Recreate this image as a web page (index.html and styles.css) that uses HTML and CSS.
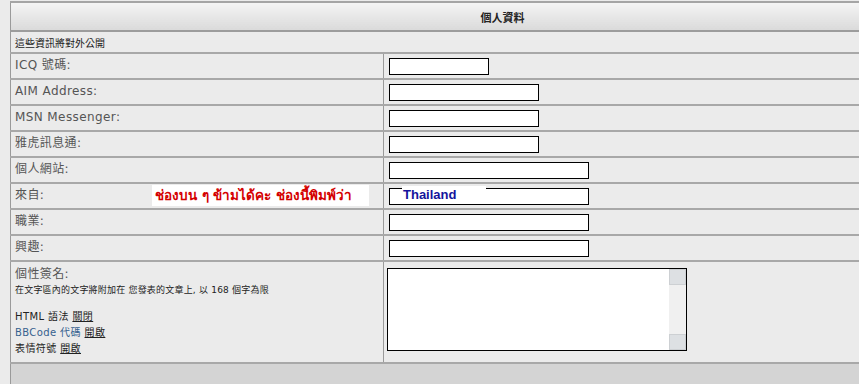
FILE: index.html
```html
<!DOCTYPE html>
<html lang="zh-Hant">
<head>
    <meta charset="UTF-8">
    <title>個人資料</title>
    <link rel="stylesheet" href="styles.css">
</head>
<body>

<div class="page">
    <table class="profile">
        <tr>
            <th colspan="2" class="head">個人資料</th>
        </tr>
        <tr>
            <td colspan="2" class="note">這些資訊將對外公開</td>
        </tr>
        <tr>
            <td class="label">ICQ 號碼:</td>
            <td class="field"><input type="text" class="box short"></td>
        </tr>
        <tr>
            <td class="label">AIM Address:</td>
            <td class="field"><input type="text" class="box mid"></td>
        </tr>
        <tr>
            <td class="label">MSN Messenger:</td>
            <td class="field"><input type="text" class="box mid"></td>
        </tr>
        <tr>
            <td class="label">雅虎訊息通:</td>
            <td class="field"><input type="text" class="box mid"></td>
        </tr>
        <tr>
            <td class="label">個人網站:</td>
            <td class="field"><input type="text" class="box long"></td>
        </tr>
        <tr>
            <td class="label from">來自:
                <span class="hint">ช่องบน ๆ ข้ามได้คะ ช่องนี้พิมพ์ว่า</span>
            </td>
            <td class="field from">
                <input type="text" class="box long">
                <span class="answer">Thailand</span>
            </td>
        </tr>
        <tr>
            <td class="label">職業:</td>
            <td class="field"><input type="text" class="box long"></td>
        </tr>
        <tr>
            <td class="label">興趣:</td>
            <td class="field"><input type="text" class="box long"></td>
        </tr>
        <tr>
            <td class="label sig">
                <div>個性簽名:</div>
                <div class="small">在文字區內的文字將附加在 您發表的文章上, 以 168 個字為限</div>
                <div class="opts">
                    <div>HTML 語法 <a href="#">關閉</a></div>
                    <div><span class="bb">BBCode 代碼</span> <a href="#">開啟</a></div>
                    <div>表情符號 <a href="#">開啟</a></div>
                </div>
            </td>
            <td class="field sig">
                <div class="area">
                    <textarea></textarea>
                    <div class="scroll">
                        <span class="btn"></span>
                        <span class="btn"></span>
                    </div>
                </div>
            </td>
        </tr>
        <tr>
            <td colspan="2" class="foot"></td>
        </tr>
    </table>
</div>

</body>
</html>
```

FILE: styles.css
```css
html, body {
    margin: 0;
    overflow: hidden;
}

body {
    background-color: #ebebeb;
    font-family: "DejaVu Sans", Verdana, "Noto Sans CJK TC", sans-serif;
    color: #555;
}

.page {
    padding: 1px 0 0 10px;
    width: 1000px;
}

.profile {
    width: 984px;
    border-collapse: collapse;
    border-left: 1px solid #9a9a9a;
    border-top: 2px solid #a5a5a5;
}

.profile td, .profile th {
    padding: 0;
    border-bottom: 2px solid #a8a8a8;
    background-color: #ebebeb;
}

.head {
    height: 27px;
    background: linear-gradient(#f4f4f4, #dadada) !important;
    font-family: "Noto Sans CJK TC", sans-serif;
    font-size: 11px;
    font-weight: bold;
    color: #222;
    text-align: center;
    border-bottom: 2px solid #9c9c9c !important;
}

.note {
    height: 20px;
    padding-left: 4px !important;
    font-family: "Noto Sans CJK TC", sans-serif;
    font-size: 10px;
    color: #222;
}

.label {
    width: 368px;
    height: 22px;
    padding-left: 4px !important;
    padding-bottom: 2px !important;
    font-size: 12px;
    letter-spacing: 0.4px;
    line-height: 14px;
    border-right: 1px solid #9a9a9a;
    position: relative;
}

.field {
    padding-left: 5px !important;
    height: 24px;
}

.box {
    display: block;
    box-sizing: border-box;
    height: 17px;
    margin: 0;
    border: 1px solid #000;
    background: #fff;
}

.short { width: 100px; }
.mid { width: 150px; }
.long { width: 200px; }

.from {
    position: relative;
}

.hint {
    position: absolute;
    left: 141px;
    top: 1px;
    width: 217px;
    height: 21px;
    background: #fff;
    color: #d40000;
    font-family: Tahoma, "DejaVu Sans", sans-serif;
    font-weight: bold;
    font-size: 13.5px;
    letter-spacing: 0;
    line-height: 21px;
    padding-left: 3px;
    box-sizing: border-box;
    white-space: nowrap;
}

.answer {
    position: absolute;
    left: 18px;
    top: 2px;
    width: 83px;
    height: 15px;
    background: #fff;
    color: #14149c;
    font-family: "Liberation Sans", Arial, sans-serif;
    font-weight: bold;
    font-size: 13px;
    line-height: 17px;
    padding-left: 1px;
}

.sig {
    height: 94px;
    vertical-align: top;
}

.label.sig {
    height: 94px;
    padding-top: 4px !important;
    padding-bottom: 0 !important;
    font-size: 12px;
    line-height: 16px;
    box-sizing: border-box;
}

.small {
    font-family: "DejaVu Sans", "Noto Sans CJK TC", sans-serif;
    font-size: 9px;
    letter-spacing: 0.2px;
    color: #222;
}

.opts {
    margin-top: 11px;
    font-size: 10px;
    color: #222;
}

.opts a {
    color: #222;
}

.bb {
    color: #36618e;
}

.field.sig {
    padding-left: 3px !important;
    padding-top: 6px !important;
}

.area {
    display: flex;
    width: 300px;
    height: 83px;
    box-sizing: border-box;
    border: 1px solid #000;
    background: #fff;
}

.area textarea {
    flex: 1;
    border: none;
    resize: none;
    margin: 0;
    padding: 0;
    outline: none;
}

.scroll {
    width: 17px;
    background: #f0f0f0;
    display: flex;
    flex-direction: column;
    justify-content: space-between;
}

.btn {
    height: 16px;
    background: #dde0e3;
    border: 1px solid #cdd0d3;
    box-sizing: border-box;
}

.foot {
    height: 26px;
    background-color: #d4d4d4 !important;
    border-top: 2px solid #a0a0a0;
}
```
